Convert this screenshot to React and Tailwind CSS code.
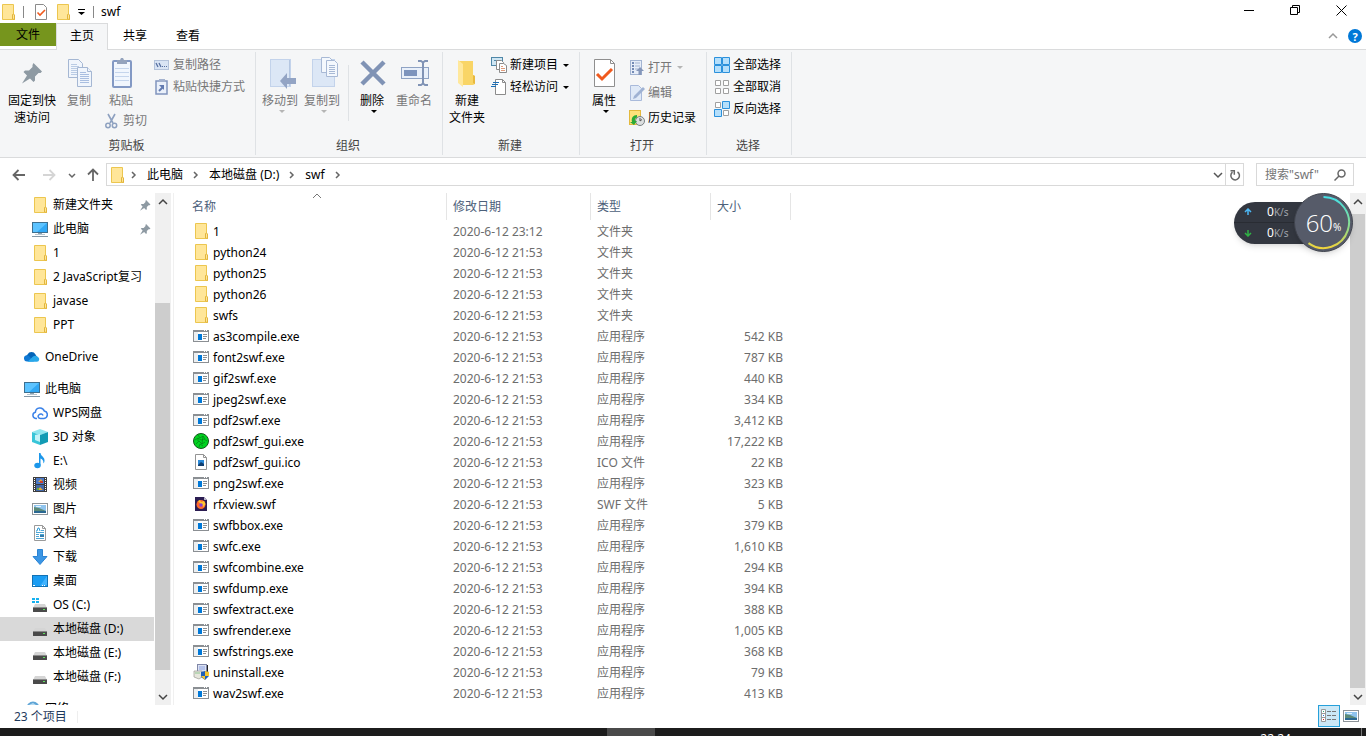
import { useState } from "react";

const folders = ["1", "python24", "python25", "python26", "swfs"];

const files = [
  ...folders.map((name) => ({ name, type: "文件夹", size: "", icon: "folder" })),
  { name: "as3compile.exe", type: "应用程序", size: "542 KB", icon: "exe" },
  { name: "font2swf.exe", type: "应用程序", size: "787 KB", icon: "exe" },
  { name: "gif2swf.exe", type: "应用程序", size: "440 KB", icon: "exe" },
  { name: "jpeg2swf.exe", type: "应用程序", size: "334 KB", icon: "exe" },
  { name: "pdf2swf.exe", type: "应用程序", size: "3,412 KB", icon: "exe" },
  { name: "pdf2swf_gui.exe", type: "应用程序", size: "17,222 KB", icon: "gui" },
  { name: "pdf2swf_gui.ico", type: "ICO 文件", size: "22 KB", icon: "ico" },
  { name: "png2swf.exe", type: "应用程序", size: "323 KB", icon: "exe" },
  { name: "rfxview.swf", type: "SWF 文件", size: "5 KB", icon: "swf" },
  { name: "swfbbox.exe", type: "应用程序", size: "379 KB", icon: "exe" },
  { name: "swfc.exe", type: "应用程序", size: "1,610 KB", icon: "exe" },
  { name: "swfcombine.exe", type: "应用程序", size: "294 KB", icon: "exe" },
  { name: "swfdump.exe", type: "应用程序", size: "394 KB", icon: "exe" },
  { name: "swfextract.exe", type: "应用程序", size: "388 KB", icon: "exe" },
  { name: "swfrender.exe", type: "应用程序", size: "1,005 KB", icon: "exe" },
  { name: "swfstrings.exe", type: "应用程序", size: "368 KB", icon: "exe" },
  { name: "uninstall.exe", type: "应用程序", size: "79 KB", icon: "setup" },
  { name: "wav2swf.exe", type: "应用程序", size: "413 KB", icon: "exe" },
];

const quickAccess = [
  { name: "新建文件夹", icon: "folder", pinned: true },
  { name: "此电脑", icon: "pc", pinned: true },
  { name: "1", icon: "folder" },
  { name: "2 JavaScript复习", icon: "folder" },
  { name: "javase", icon: "folder" },
  { name: "PPT", icon: "folder" },
];

const thisPc = [
  { name: "WPS网盘", icon: "wps" },
  { name: "3D 对象", icon: "cube" },
  { name: "E:\\", icon: "music" },
  { name: "视频", icon: "video" },
  { name: "图片", icon: "picture" },
  { name: "文档", icon: "document" },
  { name: "下载", icon: "download" },
  { name: "桌面", icon: "desktop" },
  { name: "OS (C:)", icon: "osDrive" },
  { name: "本地磁盘 (D:)", icon: "drive" },
  { name: "本地磁盘 (E:)", icon: "drive" },
  { name: "本地磁盘 (F:)", icon: "drive" },
];

const driveShape = (
  <>
    <path d="M3 7h10l2 4H1z" fill="#d5d5d5" />
    <rect x="1" y="10" width="14" height="5" rx="0.500" fill="#4a4a4a" />
    <rect x="1" y="10" width="14" height="1" fill="#8a8a8a" />
    <rect x="11" y="12" width="2" height="1" fill="#5fe35f" />
  </>
);

// 16x16 icons
const icons = {
  folder: (
    <>
      <path d="M2.500 0.500h11v10.500l1 0.500v4h-12z" fill="#ffe699" stroke="#ecc64f" />
      <path d="M12.500 15v-4.500l1-0.500 1 1v4.500z" fill="#ffe699" stroke="#e2b53c" />
    </>
  ),
  pc: (
    <>
      <rect x="0.500" y="1.500" width="15" height="10" fill="#31a8f5" stroke="#3d6f8f" />
      <path d="M1 2h14L5 11H1z" fill="#5cc3ff" />
      <rect x="6" y="12" width="4" height="1" fill="#8fa3b0" />
      <rect x="3" y="13" width="10" height="1" fill="#b7c4cd" />
      <rect x="0" y="15" width="16" height="1" fill="#8497a5" />
    </>
  ),
  onedrive: (
    <>
      <path d="M4 12a4 4 0 0 1-0.500-6.500A4.500 4.500 0 0 1 11.500 5.500L13 8z" fill="#0364b8" />
      <path d="M0 10a3.200 3.200 0 0 1 4.500-3.500L10 12.500H3A3 3 0 0 1 0 10z" fill="#0f78d4" />
      <path d="M9 7.500a4 4 0 0 1 5 0.500 2.600 2.600 0 0 1-1 4.800H3.500z" fill="#28a8ea" />
    </>
  ),
  wps: (
    <path
      d="M5 13.500H3.800a3.200 3.200 0 0 1-0.400-6.300A4.600 4.600 0 0 1 12.300 6a3.800 3.800 0 0 1-0.300 7.500H8.500C6 13.500 5.500 11 7 9.700s3.500-0.700 4 0.800"
      fill="none"
      stroke="#3b82e8"
      strokeWidth="1.500"
    />
  ),
  cube: (
    <>
      <path d="M0 3l8-3 8 3-8 3z" fill="#8fe6ef" />
      <path d="M0 3l8 3v10l-8-3z" fill="#38c5d8" />
      <path d="M16 3L8 6v10l8-3z" fill="#129bb4" />
      <path d="M3 6l5-1v8l-5-2z" fill="#c4f3f8" />
    </>
  ),
  music: (
    <>
      <path d="M7 0h1.500c0.500 3.500 4.500 4 4 8-0.200 1.500-0.800 2-1.200 2.500 0.700-3-1.500-4.500-2.800-5v7H7z" fill="#1c97ea" />
      <ellipse cx="5.500" cy="12.500" rx="3.200" ry="2.800" fill="#1c97ea" />
    </>
  ),
  video: (
    <>
      <rect x="1" y="0" width="14" height="15" fill="#3d3d3d" />
      <path d="M2.500 1v14M13.500 1v14" stroke="#fff" strokeDasharray="1 1" />
      <rect x="4" y="1" width="8" height="6" fill="#4b79c9" />
      <rect x="4" y="8" width="8" height="6" fill="#4368a8" />
      <path d="M6 5l3-3 2 3zM6 13l2-3 3 3z" fill="#e8a83a" />
      <rect x="8" y="4" width="3" height="2" fill="#c8402e" />
      <rect x="5" y="11" width="2" height="2" fill="#67a83d" />
    </>
  ),
  picture: (
    <>
      <rect x="0.500" y="2.500" width="15" height="11" fill="#fff" stroke="#8d9499" />
      <rect x="2" y="4" width="12" height="8" fill="#8fc4ee" />
      <path d="M2 6l5 1 7 3v2H2z" fill="#5c8a78" />
      <path d="M2 10h12v2H2z" fill="#2a6892" />
      <path d="M4 5h5v1H4z" fill="#e4f2fb" />
    </>
  ),
  document: (
    <>
      <path d="M2.500 0.500h8l3 3v12h-11z" fill="#fff" stroke="#9a9a9a" />
      <path d="M10.500 0.500v3h3" fill="none" stroke="#9a9a9a" />
      <path d="M4 6h1l1-3h1l1 3" fill="none" stroke="#2d9bd8" />
      <path d="M9 5.500h3M4 7.500h8M4 9.500h3M8 9.500h4M4 11.500h3M4 13.500h8" stroke="#4da6d5" />
      <rect x="8" y="10" width="4" height="2" fill="#347cab" />
    </>
  ),
  download: <path d="M5.500 0.500h5v7h4.500l-7 8-7-8h4.500z" fill="#3b96e5" stroke="#2b83d3" />,
  desktop: (
    <>
      <rect x="0.500" y="2.500" width="15" height="11" fill="#1b9df3" stroke="#1272b5" />
      <path d="M15 3v9L8 13z" fill="#42b4ff" />
      <path d="M1 12.500h2M10 12.500h1M12 12.500h1" stroke="#fff" />
    </>
  ),
  drive: driveShape,
  osDrive: (
    <>
      {driveShape}
      <path d="M0 1h3v2H0zM4 1h3v2H4zM0 4h3v2H0zM4 4h3v2H4z" fill="#16b1f0" />
    </>
  ),
  network: (
    <>
      <circle cx="9" cy="7" r="6.500" fill="#5fa5d6" />
      <path d="M5 4l4-2 3 2-2 3z" fill="#b8dcf2" />
    </>
  ),
  exe: (
    <>
      <rect x="0.500" y="2.500" width="15" height="11" fill="#fff" stroke="#8b8f93" />
      <rect x="0" y="2" width="16" height="2" fill="#8b8f93" />
      <path d="M11 2.500h1M13 2.500h1" stroke="#fff" />
      <rect x="1" y="4" width="4" height="9" fill="#eceff1" />
      <rect x="5" y="6" width="4" height="6" fill="#0078d7" />
      <path d="M10 6.500h4M10 8.500h4M10 10.500h3" stroke="#8b8f93" />
    </>
  ),
  gui: (
    <>
      <circle cx="8" cy="8" r="7.500" fill="#00d420" stroke="#13571c" />
      <path
        d="M5 2l2 3 3-2 2 3M2 7l3-2 3 2 3-1 3 2M3 11l3-3 3 3 3-2M6 14l1-3 3 2M5 5v3M10 3l-1 8"
        fill="none"
        stroke="#067d17"
        strokeWidth="0.700"
      />
    </>
  ),
  ico: (
    <>
      <path d="M2.500 0.500h8l3 3v12h-11z" fill="#fff" stroke="#949494" />
      <path d="M10.500 0.500v3h3" fill="none" stroke="#949494" />
      <rect x="5" y="6" width="6" height="6" fill="#2b8ad8" />
      <path d="M5 11l3-3 3 2v2H5z" fill="#123f70" />
    </>
  ),
  swf: (
    <>
      <path d="M2 1h9l3 3v11H2z" fill="#2b1d52" />
      <path d="M11 1v3h3z" fill="#b8b4c8" />
      <circle cx="8" cy="8.500" r="4.500" fill="#ff6a2a" />
      <path d="M5 5l2-1 1 2 3-1 1.500 3-2 3z" fill="#ffc72e" />
      <circle cx="8" cy="9" r="1.800" fill="#8a3fd0" />
    </>
  ),
  setup: (
    <>
      <rect x="4.500" y="0.500" width="9" height="8" fill="#dce2f3" stroke="#8087a8" />
      <rect x="6" y="2" width="6" height="4" fill="#b4c2ea" />
      <path d="M14.500 1v8" stroke="#222" />
      <path d="M1 7h8v6l-3 2-5-2z" fill="#e6e6dc" stroke="#9a9a92" strokeWidth="0.700" />
      <path d="M2 8h5v2H2z" fill="#b9d5b6" />
      <path d="M8 8l4-1 4 1v4l-4 4-4-3z" fill="#1f5fb8" />
      <path d="M12 7l4 1v4h-4zM8 12h4v4z" fill="#f5c52e" />
    </>
  ),
  copyPath: (
    <>
      <rect x="0.500" y="3.500" width="14" height="9" fill="#d9e4f4" stroke="#b3c2da" />
      <path d="M2 6l2 4M5 6l2 4" stroke="#5770a0" strokeWidth="1.300" />
      <path d="M8 9.500h1M10 9.500h1M12 9.500h1" stroke="#5770a0" />
    </>
  ),
  pasteLink: (
    <>
      <rect x="2" y="2" width="11" height="13" fill="#eaf0fa" stroke="#8094bd" strokeWidth="1.500" />
      <rect x="5" y="0" width="6" height="3" fill="#a4b2ce" />
      <path d="M5 12l4-4" stroke="#637bb0" strokeWidth="2" />
      <path d="M5 6h5v5z" fill="#637bb0" />
    </>
  ),
  cut: (
    <g fill="none" stroke="#8ea1c0">
      <path d="M4 1l5 9M11 1L6 10" strokeWidth="1.600" />
      <circle cx="4" cy="12.500" r="2.200" strokeWidth="1.500" />
      <circle cx="10.500" cy="12.500" r="2.200" strokeWidth="1.500" />
    </g>
  ),
  newItem: (
    <>
      <rect x="0.500" y="0.500" width="11" height="8" fill="#cfe6f3" stroke="#4f87a8" />
      <path d="M3 3.500h5" stroke="#4f87a8" />
      <path d="M5.500 3.500h5l2 2v7h-7z" fill="#fff" stroke="#8b8b8b" />
      <path d="M8.500 6.500h4l3 2v7h-7z" fill="#fff" stroke="#8b8b8b" />
      <path d="M10 9.500h2M10 11.500h4M10 13.500h4" stroke="#e19b7a" />
    </>
  ),
  easyAccess: (
    <>
      <path d="M4.500 0.500h7l3 3v12h-10z" fill="#fff" stroke="#8b8b8b" />
      <path d="M11.500 0.500v3h3" fill="none" stroke="#8b8b8b" />
      <path d="M2 3.500h6M1 5.500h6M0 7.500h5" stroke="#1d6fb5" />
    </>
  ),
  open: (
    <>
      <rect x="1.500" y="0.500" width="11" height="14" fill="#e6edf8" stroke="#a2b4d2" />
      <path d="M3 3h2M3 6h2M3 9h2M3 12h2" stroke="#748bb5" strokeWidth="2" />
      <path d="M6 3h5M6 6h5M6 9h3" stroke="#a2b4d2" />
      <path d="M11 7l4 4h-2.500v4h-3v-4H7z" fill="#8496b9" />
    </>
  ),
  edit: (
    <>
      <path d="M1.500 0.500h8l3 3v12h-11z" fill="#dfe9f7" stroke="#a9badb" />
      <path d="M4 14l1-3 9-9 2 2-9 9z" fill="#9fb2d3" />
    </>
  ),
  history: (
    <>
      <rect x="0.500" y="0.500" width="11" height="14" fill="#ffe27a" stroke="#e3b93d" />
      <circle cx="11" cy="11" r="4.500" fill="#dcdfe0" stroke="#7a8184" />
      <path d="M11 8v3l2-1.500" fill="none" stroke="#555" />
      <path d="M8 5C4 5 2 8 3 12H1l4 3 3-4H6c-0.500-2 0.500-3 2-3.500z" fill="#2bab36" />
    </>
  ),
  selectAll: (
    <path d="M0.500 0.500h7v7h-7zM8.500 0.500h7v7h-7zM0.500 8.500h7v7h-7zM8.500 8.500h7v7h-7z" fill="#b5dffb" stroke="#2b91dc" />
  ),
  selectNone: (
    <path d="M1.500 1.500h5v5h-5zM9.500 1.500h5v5h-5zM1.500 9.500h5v5h-5zM9.500 9.500h5v5h-5z" fill="#fff" stroke="#a0a0a0" />
  ),
  selectInvert: (
    <>
      <path d="M1.500 1.500h5v5h-5zM9.500 9.500h5v5h-5z" fill="#fff" stroke="#a0a0a0" />
      <path d="M8.500 0.500h7v7h-7zM0.500 8.500h7v7h-7z" fill="#b5dffb" stroke="#2b91dc" />
    </>
  ),
  properties: (
    <>
      <path d="M2.500 0.500h8l3 3v12h-11z" fill="#fff" stroke="#8b8b8b" />
      <path d="M4.500 8.500l2.500 2.500 5-5" fill="none" stroke="#f05a1e" strokeWidth="1.600" />
    </>
  ),
};

// 32x32 ribbon icons
const bigIcons = {
  pin: (
    <path
      d="M17.500 6l8.500 8.500-1.500 1.500h-2l-3.500 3.500v4l-1.500 1.500-3.500-3.500-8 5 5-8-3.500-3.500 1.500-1.500h4l3.500-3.500v-2z"
      fill="#8e9aa3"
    />
  ),
  copy: (
    <g fill="#f0f5fc" stroke="#a5b7d3">
      <path d="M5.500 2.500h10l4 4v14h-14z" />
      <path d="M8 7.500h6M8 9.500h8M8 11.500h8M8 13.500h8M8 15.500h8M8 17.500h8" stroke="#b9cbe4" />
      <path d="M14.500 10.500h10l4 4v15h-14z" />
      <path d="M24.500 10.500v4h4" />
      <path d="M17 15.500h6M17 17.500h9M17 19.500h9M17 21.500h9M17 23.500h9M17 25.500h9" stroke="#a9bee0" />
    </g>
  ),
  paste: (
    <>
      <rect x="8" y="4" width="18" height="26" rx="1" fill="#f1f6fd" stroke="#8399c4" strokeWidth="2" />
      <path d="M10 11.500h14M10 15.500h14M10 19.500h14M10 23.500h14" stroke="#c5d5ec" />
      <path d="M12 3h3l1-2h2l1 2h3v4H12z" fill="#94a3bd" />
    </>
  ),
  moveTo: (
    <>
      <rect x="6.500" y="2.500" width="20" height="27" fill="#dce7f6" stroke="#c3d3eb" />
      <path d="M25.500 3v26" stroke="#b4c6e1" />
      <path d="M16 24l7-8v5h9v6h-9v5z" fill="#93a4c4" />
    </>
  ),
  copyTo: (
    <>
      <rect x="6.500" y="2.500" width="22" height="27" fill="#dce7f6" stroke="#c3d3eb" />
      <g fill="#f4f8fd" stroke="#a8b9d5">
        <path d="M15.500 0.500h8l3 3v12h-11z" />
        <path d="M20.500 3.500h8l3 3v13h-11z" />
        <path d="M23 8.500h6M23 10.500h6M23 12.500h6M23 14.500h6M23 16.500h6" />
      </g>
    </>
  ),
  remove: <path d="M6 5l22 22M28 5L6 27" stroke="#8093b5" strokeWidth="4.500" />,
  rename: (
    <>
      <rect x="3.500" y="10.500" width="27" height="11" fill="#e9f0fa" stroke="#8fa3c4" />
      <rect x="6" y="13" width="13" height="6" fill="#7d94bd" />
      <path d="M20 4h3l2 1.500 2-1.500h3M20 28h3l2-1.500 2 1.500h3M25 5v22" fill="none" stroke="#8093b5" strokeWidth="2" />
    </>
  ),
  newFolder: (
    <>
      <path d="M7 4h15v14l2 1v8l-2 1H11z" fill="#f9d566" />
      <path d="M7 3l5 4v23l-5-4z" fill="#ffe89c" />
      <path d="M22 18l2 1v8l-2-1z" fill="#e8b93f" />
    </>
  ),
  properties: (
    <>
      <path d="M6.500 2.500h16l4 4v23h-20z" fill="#fff" stroke="#8f8f8f" />
      <path d="M22.500 2.500v4h4" fill="none" stroke="#8f8f8f" />
      <path d="M9 17l5 5 10-10" fill="none" stroke="#f05a1e" strokeWidth="3" />
    </>
  ),
};

const Icon = ({ name, className = "" }) => (
  <svg viewBox="0 0 16 16" className={`size-4 shrink-0 ${className}`} aria-hidden="true">
    {icons[name]}
  </svg>
);

const Chevron = ({ d, className = "stroke-[#666]" }) => (
  <svg viewBox="0 0 10 10" className={`size-[10px] shrink-0 fill-none ${className}`} strokeWidth="1.500" aria-hidden="true">
    <path d={d} />
  </svg>
);

const UP = "M1 7l4-4 4 4";
const DOWN = "M1 3l4 4 4-4";
const RIGHT = "M3 2l3 3-3 3";

const Caret = ({ muted }) => (
  <svg viewBox="0 0 6 3" className={`h-[3px] w-1.5 shrink-0 ${muted ? "fill-[#b5b5b5]" : "fill-black"}`} aria-hidden="true">
    <path d="M0 0h6L3 3z" />
  </svg>
);

const BigButton = ({ icon, lines, muted, caret }) => (
  <button className={`flex w-[42px] shrink-0 flex-col items-center pt-[3px] leading-[17px] whitespace-nowrap ${muted ? "text-[#777]" : "text-black"}`}>
    <svg viewBox="0 0 32 32" className="mb-[3px] size-8" aria-hidden="true">
      {bigIcons[icon]}
    </svg>
    {lines.map((line) => (
      <span key={line}>{line}</span>
    ))}
    {caret && (
      <span className="flex pt-px pl-1">
        <Caret muted={muted} />
      </span>
    )}
  </button>
);

const SmallButton = ({ icon, label, muted, caret, tall }) => (
  <button className={`flex shrink-0 items-center gap-[3px] whitespace-nowrap ${tall ? "h-[25px]" : "h-[22px]"} ${muted ? "text-[#777]" : "text-black"}`}>
    <Icon name={icon} />
    {label}
    {caret && (
      <span className="ml-0.5">
        <Caret muted={muted} />
      </span>
    )}
  </button>
);

const Group = ({ label, width, children }) => (
  <section className={`my-0.5 flex shrink-0 flex-col border-r border-[#dfe2e5] pt-0.5 ${width}`}>
    <div className="flex h-[82px] pl-[3px]">{children}</div>
    <h2 className="pr-0.5 text-center leading-[19px] text-[#444]">{label}</h2>
  </section>
);

const Ribbon = () => (
  <div className="flex h-[108px] shrink-0 border-b border-[#dadbdc] bg-[#f5f6f7]">
    <Group label="剪贴板" width="w-[256px]">
      <div className="flex w-[55px] justify-center pl-[3px]">
        <BigButton icon="pin" lines={["固定到快", "速访问"]} />
      </div>
      <BigButton icon="copy" lines={["复制"]} muted />
      <div className="flex w-[54px] flex-col items-start">
        <BigButton icon="paste" lines={["粘贴"]} muted />
        <div className="pt-px pl-1">
          <SmallButton icon="cut" label="剪切" muted />
        </div>
      </div>
      <div className="flex flex-col items-start">
        <SmallButton icon="copyPath" label="复制路径" muted />
        <SmallButton icon="pasteLink" label="粘贴快捷方式" muted />
      </div>
    </Group>
    <Group label="组织" width="w-[187px]">
      <BigButton icon="moveTo" lines={["移动到"]} muted caret />
      <BigButton icon="copyTo" lines={["复制到"]} muted caret />
      <div className="mt-[11px] mr-0.5 ml-[5px] h-14 w-px bg-[#dfe2e5]" />
      <BigButton icon="remove" lines={["删除"]} caret />
      <BigButton icon="rename" lines={["重命名"]} muted />
    </Group>
    <Group label="新建" width="w-[137px]">
      <BigButton icon="newFolder" lines={["新建", "文件夹"]} />
      <div className="flex flex-col items-start pl-[3px]">
        <SmallButton icon="newItem" label="新建项目" caret />
        <SmallButton icon="easyAccess" label="轻松访问" caret />
      </div>
    </Group>
    <Group label="打开" width="w-[127px]">
      <BigButton icon="properties" lines={["属性"]} caret />
      <div className="flex flex-col items-start pt-px pl-1">
        <SmallButton icon="open" label="打开" muted caret tall />
        <SmallButton icon="edit" label="编辑" muted tall />
        <SmallButton icon="history" label="历史记录" tall />
      </div>
    </Group>
    <Group label="选择" width="w-[85px]">
      <div className="flex flex-col items-start pl-1">
        <SmallButton icon="selectAll" label="全部选择" />
        <SmallButton icon="selectNone" label="全部取消" />
        <SmallButton icon="selectInvert" label="反向选择" />
      </div>
    </Group>
  </div>
);

const TitleBar = () => (
  <header className="flex h-[23px] shrink-0 items-center">
    <Icon name="folder" />
    <div className="ml-[7px] h-3 w-px bg-[#888]" />
    <button aria-label="属性" className="ml-[9px]">
      <Icon name="properties" />
    </button>
    <button aria-label="新建文件夹" className="ml-1.5">
      <Icon name="folder" />
    </button>
    <button aria-label="自定义快速访问工具栏" className="ml-[7px]">
      <svg viewBox="0 0 7 6" className="h-1.5 w-[7px]">
        <path d="M0 0h7v1H0zM0 3h7L3.500 6z" />
      </svg>
    </button>
    <div className="ml-2 h-3 w-px bg-[#888]" />
    <h1 className="ml-[7px]">swf</h1>
    <div className="mr-0.5 ml-auto flex h-full pb-0.5">
      <button aria-label="最小化" className="flex w-[46px] items-center justify-center">
        <svg viewBox="0 0 11 11" className="size-[11px] stroke-black">
          <path d="M0 5.500h10" />
        </svg>
      </button>
      <button aria-label="还原" className="flex w-[46px] items-center justify-center">
        <svg viewBox="0 0 11 11" className="size-[11px] fill-none stroke-black">
          <path d="M0.500 2.500h7v7h-7zM2.500 2.500v-2h7v7h-2" />
        </svg>
      </button>
      <button aria-label="关闭" className="flex w-[46px] items-center justify-center">
        <svg viewBox="0 0 11 11" className="size-[11px] stroke-black">
          <path d="M0.500 0.500l10 10M10.500 0.500l-10 10" />
        </svg>
      </button>
    </div>
  </header>
);

const Tabs = () => (
  <div className="flex h-[27px] shrink-0">
    <div className="w-14 border-b border-[#dadbdc]">
      <button className="h-[23px] w-full bg-[#76951d] text-black">文件</button>
    </div>
    <button className="w-[52px] border-x border-t border-[#dadbdc] bg-[#f5f6f7] pb-0.5">主页</button>
    <nav className="flex flex-1 gap-px border-b border-[#dadbdc] pl-px">
      <button className="w-[52px]">共享</button>
      <button className="w-[52px]">查看</button>
      <div className="ml-auto flex items-center gap-[10px] pr-1">
        <button aria-label="最小化功能区">
          <Chevron d={UP} className="stroke-[#999]" />
        </button>
        <button aria-label="帮助" className="flex size-[14px] items-center justify-center rounded-full bg-[#0078d7] text-[11px] leading-none font-bold text-white">
          ?
        </button>
      </div>
    </nav>
  </div>
);

const AddressBar = () => (
  <div className="flex h-[35px] shrink-0 items-center pb-0.5">
    <button aria-label="后退" className="ml-3">
      <svg viewBox="0 0 14 12" className="h-3 w-[14px] fill-none stroke-[#666]" strokeWidth="1.800">
        <path d="M13 6H1.500M6.500 1l-5 5 5 5" />
      </svg>
    </button>
    <button aria-label="前进" className="ml-4">
      <svg viewBox="0 0 14 12" className="h-3 w-[14px] fill-none stroke-[#d5d5d5]" strokeWidth="1.800">
        <path d="M1 6h11.500M7.500 1l5 5-5 5" />
      </svg>
    </button>
    <button aria-label="最近浏览的位置" className="ml-[11px]">
      <Chevron d="M2 4l3 3 3-3" />
    </button>
    <button aria-label="上移" className="ml-[10px]">
      <svg viewBox="0 0 12 14" className="h-[14px] w-3 fill-none stroke-[#666]" strokeWidth="1.800">
        <path d="M6 13V2M1 6.500l5-5 5 5" />
      </svg>
    </button>
    <nav className="ml-[7px] flex h-[23px] flex-1 items-center border border-[#d9d9d9] pl-0.5">
      <Icon name="folder" />
      <span className="mx-1"><Chevron d={RIGHT} /></span>
      <a href="#pc" className="px-1">此电脑</a>
      <span className="mx-1"><Chevron d={RIGHT} /></span>
      <a href="#d" className="px-1">本地磁盘 (D:)</a>
      <span className="mx-1"><Chevron d={RIGHT} /></span>
      <a href="#swf" className="px-1">swf</a>
      <span className="mx-1"><Chevron d={RIGHT} /></span>
      <button aria-label="以前的位置" className="ml-auto px-0.5">
        <Chevron d={DOWN} className="stroke-[#555]" />
      </button>
      <button aria-label="刷新" className="flex h-full w-[18px] items-center justify-center border-l border-[#d9d9d9]">
        <svg viewBox="0 0 12 12" className="size-3 fill-none stroke-[#666]" strokeWidth="1.500">
          <path d="M8.500 3a4.300 4.300 0 1 1-5 0.200M1.500 1.700h3.800v4" />
        </svg>
      </button>
    </nav>
    <label className="mx-3 flex h-[23px] w-[98px] items-center border border-[#d9d9d9] pr-[7px] pl-2">
      <input type="text" aria-label="搜索" placeholder='搜索"swf"' className="w-0 flex-1 outline-none placeholder:text-[#757575]" />
      <svg viewBox="0 0 12 12" className="size-3 fill-none stroke-[#666]" strokeWidth="1.500">
        <circle cx="7.500" cy="4.500" r="3.500" />
        <path d="M5 7l-4.500 4.500" />
      </svg>
    </label>
  </div>
);

const NavItem = ({ name, icon, pinned, top, selected, onSelect }) => (
  <li>
    <button
      onClick={() => onSelect(name)}
      className={`flex h-6 w-full items-center gap-[5px] pr-[3px] whitespace-nowrap ${top ? "pl-6" : "pl-8"} ${selected ? "bg-[#d9d9d9]" : ""}`}
    >
      <Icon name={icon} />
      {name}
      {pinned && (
        <svg viewBox="6 6 21 21" className="ml-auto size-[11px]" aria-hidden="true">
          {bigIcons.pin}
        </svg>
      )}
    </button>
  </li>
);

const NavPane = () => {
  const [selected, setSelected] = useState("本地磁盘 (D:)");

  return (
    <aside className="flex w-[174px] shrink-0 border-r border-[#f0f0f0] pr-0.5">
      <div className="flex-1 overflow-hidden pr-px">
        <ul>
          {quickAccess.map((item) => (
            <NavItem key={item.name} {...item} onSelect={setSelected} />
          ))}
        </ul>
        <ul className="mt-2">
          <NavItem name="OneDrive" icon="onedrive" top onSelect={setSelected} />
        </ul>
        <ul className="mt-2">
          <NavItem name="此电脑" icon="pc" top onSelect={setSelected} />
          {thisPc.map((item) => (
            <NavItem key={item.name} {...item} selected={selected === item.name} onSelect={setSelected} />
          ))}
        </ul>
        <ul className="mt-2">
          <NavItem name="网络" icon="network" top onSelect={setSelected} />
        </ul>
      </div>
      <div className="flex w-4 flex-col bg-[#f0f0f0]">
        <button aria-label="向上滚动" className="flex h-[17px] items-center justify-center pr-px">
          <Chevron d={UP} className="stroke-[#444]" />
        </button>
        <div className="flex-[93]" />
        <div className="mr-px flex-[367] bg-[#cdcdcd]" />
        <div className="flex-[18]" />
        <button aria-label="向下滚动" className="flex h-[17px] items-center justify-center pr-px">
          <Chevron d={DOWN} className="stroke-[#444]" />
        </button>
      </div>
    </aside>
  );
};

const FileList = () => (
  <main className="flex-1 overflow-hidden">
    <table className="w-[617px] table-fixed border-separate border-spacing-0 text-left">
      <thead>
        <tr className="h-7 text-[#4c607a]">
          <th className="relative w-[273px] p-0 pl-[18px] font-normal">
            名称
            <svg viewBox="0 0 10 10" className="absolute top-[-2px] left-[138px] size-[10px] fill-none stroke-[#777]">
              <path d="M1 7l4-4 4 4" />
            </svg>
            <span className="absolute top-0 right-0 h-[27px] w-px bg-[#e5e5e5]" />
          </th>
          <th className="relative w-36 p-0 pl-1.5 font-normal">
            修改日期
            <span className="absolute top-0 right-0 h-[27px] w-px bg-[#e5e5e5]" />
          </th>
          <th className="relative w-[120px] p-0 pl-1.5 font-normal">
            类型
            <span className="absolute top-0 right-0 h-[27px] w-px bg-[#e5e5e5]" />
          </th>
          <th className="relative w-20 p-0 pl-1.5 font-normal">
            大小
            <span className="absolute top-0 right-0 h-[27px] w-px bg-[#e5e5e5]" />
          </th>
        </tr>
      </thead>
      <tbody className="text-[#6d6d6d]">
        {files.map((file) => (
          <tr key={file.name} className="h-[21px]">
            <td className="p-0 pl-[19px] text-black">
              <div className="flex h-[21px] items-center gap-1">
                <Icon name={file.icon} className="mb-px" />
                {file.name}
              </div>
            </td>
            <td className="p-0 pl-1.5">{file.name === "1" ? "2020-6-12 23:12" : "2020-6-12 21:53"}</td>
            <td className="p-0 pl-1.5">{file.type}</td>
            <td className="p-0 pr-2 text-right">{file.size}</td>
          </tr>
        ))}
      </tbody>
    </table>
  </main>
);

// floating network / memory monitor
const Monitor = () => (
  <div className="absolute top-0 right-[13px] flex h-[59px] items-center text-white">
    <div className="flex h-[42px] w-[90px] flex-col rounded-l-full bg-[#333740] shadow-md">
      <div className="flex flex-1 items-center border-b border-[#292c33] pl-[10px]">
        <svg viewBox="0 0 8 8" className="size-2 fill-none stroke-[#4db8f5]" strokeWidth="1.500">
          <path d="M4 7V1M1 4l3-3 3 3" />
        </svg>
        <span className="ml-[15px]">0</span>
        <span className="text-[10px] text-[#a0a4ac]">K/s</span>
      </div>
      <div className="flex flex-1 items-center pl-[10px]">
        <svg viewBox="0 0 8 8" className="size-2 fill-none stroke-[#2fb344]" strokeWidth="1.500">
          <path d="M4 1v6M1 4l3 3 3-3" />
        </svg>
        <span className="ml-[15px]">0</span>
        <span className="text-[10px] text-[#a0a4ac]">K/s</span>
      </div>
    </div>
    <div className="relative -ml-[30px] flex size-[59px] items-center justify-center rounded-full border border-[#40444e] bg-[#565b69] shadow-md">
      <svg viewBox="0 0 57 57" className="absolute inset-0 size-full fill-none" strokeWidth="2" aria-hidden="true">
        <defs>
          <linearGradient id="ring" x1="0" y1="0" x2="0" y2="1">
            <stop offset="0" stopColor="#45e0e6" />
            <stop offset="0.600" stopColor="#8fdb8a" />
            <stop offset="1" stopColor="#f0d43c" />
          </linearGradient>
        </defs>
        <path d="M28.500 3a25.500 25.500 0 1 1-15 46.100" stroke="url(#ring)" />
      </svg>
      <span className="relative font-['Open_Sans'] text-2xl leading-none font-light">60</span>
      <span className="relative pt-2 text-[10px] leading-none">%</span>
    </div>
  </div>
);

const StatusBar = () => (
  <footer className="flex h-[23px] shrink-0 items-center pl-[14px] text-[#1e395b]">
    23 个项目
    <div className="ml-[10px] h-3 w-px bg-[#eee]" />
    <div className="ml-auto flex h-full items-start pr-[7px]">
      <button aria-label="详细信息" className="flex h-[22px] w-[22px] items-center justify-center border border-[#26a0da] bg-[#cce8f6]">
        <svg viewBox="0 0 16 14" className="h-[14px] w-4 fill-none">
          <path d="M0.500 0.500h4v12h-4zM0 4.500h5M0 8.500h5" fill="#fff" stroke="#999" />
          <path d="M6 2.500h4M11 2.500h4M6 6.500h4M11 6.500h4M6 10.500h4M11 10.500h4" stroke="#777" />
          <path d="M2 2.500h1" stroke="#3a7" />
          <path d="M2 6.500h1" stroke="#27d" />
          <path d="M2 10.500h1" stroke="#d22" />
        </svg>
      </button>
      <button aria-label="大图标" className="flex h-[22px] items-center pl-[3px]">
        <Icon name="picture" />
      </button>
    </div>
  </footer>
);

const App = () => {
  return (
    <div className="flex h-screen flex-col overflow-hidden bg-white font-['Noto_Sans','Noto_Sans_CJK_SC',sans-serif] text-[12px] leading-[18px] text-black">
      <TitleBar />
      <Tabs />
      <Ribbon />
      <AddressBar />
      <div className="relative flex min-h-0 flex-1">
        <NavPane />
        <FileList />
        <div className="flex w-4 shrink-0 flex-col bg-[#f0f0f0]">
          <button aria-label="向上滚动" className="flex h-[21px] shrink-0 items-center justify-center pr-px pb-1">
            <Chevron d={UP} className="stroke-[#444]" />
          </button>
          <div className="mr-px flex-1 bg-[#cdcdcd]" />
          <button aria-label="向下滚动" className="flex h-[17px] shrink-0 items-center justify-center pr-px">
            <Chevron d={DOWN} className="stroke-[#444]" />
          </button>
        </div>
        <Monitor />
      </div>
      <StatusBar />
      <div className="flex h-2 shrink-0 items-start overflow-hidden bg-[#1c1c1c] text-white">
        <div className="ml-[44.4%] h-full w-12 bg-[#4a4a4a]" />
        <span className="mt-0.5 mr-[70px] ml-auto">22:24</span>
        <div className="mr-1 h-full w-px bg-[#777]" />
      </div>
    </div>
  );
};

export default App;
